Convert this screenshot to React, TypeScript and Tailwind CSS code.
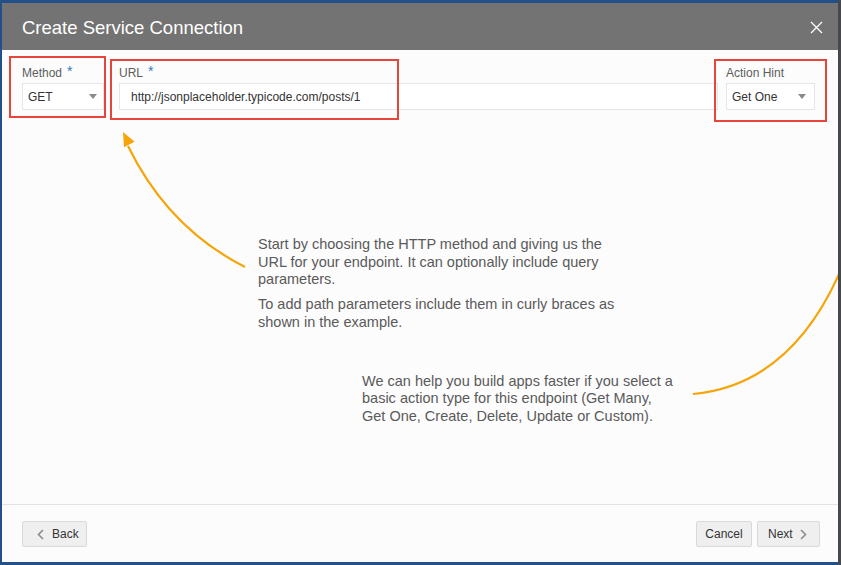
import * as React from 'react';

const font = { fontFamily: '"Liberation Sans", Arial, sans-serif' };

function Caret() {
  return (
    <svg width="8" height="5" viewBox="0 0 8 5" className="shrink-0">
      <path d="M0 0 L8 0 L4 5 Z" fill="#8a8a8a"/>
    </svg>
  );
}

function Chevron({dir}: {dir: 'left' | 'right'}) {
  return (
    <svg width="7" height="11" viewBox="0 0 7 11">
      {dir === 'left'
        ? <polyline points="6,1 1.5,5.5 6,10" fill="none" stroke="#8c8c8c" strokeWidth="1.6"/>
        : <polyline points="1,1 5.5,5.5 1,10" fill="none" stroke="#8c8c8c" strokeWidth="1.6"/>}
    </svg>
  );
}

function Label({text, required}: {text: string, required?: boolean}) {
  return (
    <div className="h-[15px] mb-[2px] text-[12px] leading-[15px] text-[#5c5c5c] flex">
      {text}
      {required && <span className="ml-[5px] text-[#2f7bc4] text-[14px] leading-[10px]">*</span>}
    </div>
  );
}

export default function App() {
  return (
    <div className="relative w-[841px] h-[565px] bg-[#24508a] pt-[3px] pl-[2px] pb-[3px] overflow-hidden" style={font}>
      <div className="flex flex-col w-[836px] h-[559px] bg-[#fcfcfc]">
        {/* header */}
        <div className="flex items-center justify-between h-[47px] bg-[#737373] pl-[20px] pr-[15px] shrink-0">
          <h1 className="text-[18.5px] text-white pt-[2px]">Create Service Connection</h1>
          <svg width="13" height="13" viewBox="0 0 13 13" className="mt-[1px]">
            <path d="M1 1 L12 12 M12 1 L1 12" stroke="#ffffff" strokeWidth="1.3"/>
          </svg>
        </div>

        {/* body */}
        <div className="flex-1 flex flex-col">
          <div className="flex pl-[20px] pr-[23px] pt-[16px]">
            <div className="w-[82px]">
              <Label text="Method" required/>
              <div className="flex items-center justify-between h-[27px] bg-white border border-[#e6e6e6] pl-[5px] pr-[6px] text-[12px] text-[#333]">
                GET
                <Caret/>
              </div>
            </div>
            <div className="flex-1 ml-[15px]">
              <Label text="URL" required/>
              <div className="flex items-center h-[27px] bg-white border border-[#e6e6e6] pl-[11px] text-[12px] text-[#333]">
                http://jsonplaceholder.typicode.com/posts/1
              </div>
            </div>
            <div className="w-[89px] ml-[8px]">
              <Label text="Action Hint"/>
              <div className="flex items-center justify-between h-[27px] bg-white border border-[#e6e6e6] pl-[5px] pr-[8px] text-[12px] text-[#333]">
                Get One
                <Caret/>
              </div>
            </div>
          </div>

          <div className="ml-[256px] mt-[126px] text-[14.5px] leading-[17.7px] text-[#5a5a5a]">
            <p>Start by choosing the HTTP method and giving us the<br/>URL for your endpoint. It can optionally include query<br/>parameters.</p>
            <p className="mt-[7px]">To add path parameters include them in curly braces as<br/>shown in the example.</p>
          </div>

          <div className="ml-[360px] mt-[41px] text-[14.5px] leading-[17.5px] text-[#5a5a5a]">
            <p>We can help you build apps faster if you select a<br/>basic action type for this endpoint (Get Many,<br/>Get One, Create, Delete, Update or Custom).</p>
          </div>
        </div>

        {/* footer */}
        <div className="flex items-start justify-between h-[58px] border-t border-[#e3e3e3] pl-[20px] pr-[18px] pt-[16px] shrink-0">
          <button className="flex items-center gap-[8px] h-[26px] w-[65px] pl-[14px] bg-[#efefef] border border-[#d9d9d9] rounded-[2px] text-[12px] text-[#333]">
            <Chevron dir="left"/>
            Back
          </button>
          <div className="flex gap-[5px]">
            <button className="h-[26px] w-[56px] bg-[#efefef] border border-[#d9d9d9] rounded-[2px] text-[12px] text-[#333]">
              Cancel
            </button>
            <button className="flex items-center gap-[7px] h-[26px] w-[63px] pl-[10px] bg-[#efefef] border border-[#d9d9d9] rounded-[2px] text-[12px] text-[#333]">
              Next
              <Chevron dir="right"/>
            </button>
          </div>
        </div>
      </div>

      {/* right edge */}
      <div className="absolute top-0 right-0 w-[3px] h-[565px] bg-[#45484d]"/>

      {/* annotation boxes */}
      <div className="absolute left-[9px] top-[56px] w-[97px] h-[62px] border-2 border-[#e8453a]"/>
      <div className="absolute left-[110px] top-[59px] w-[289px] h-[61px] border-2 border-[#e8453a]"/>
      <div className="absolute left-[714px] top-[59px] w-[113px] h-[63px] border-2 border-[#e8453a]"/>

      {/* annotation arrows */}
      <svg className="absolute left-0 top-0 pointer-events-none" width="838" height="565" viewBox="0 0 838 565">
        <path d="M245 267 Q168 228 128 146" fill="none" stroke="#f5a50a" strokeWidth="2.2"/>
        <path d="M123 132 L134.6 141.8 L124 147.2 Z" fill="#f5a50a"/>
        <path d="M693 394 Q790 385 840 272" fill="none" stroke="#f5a50a" strokeWidth="2.2"/>
      </svg>
    </div>
  );
}
